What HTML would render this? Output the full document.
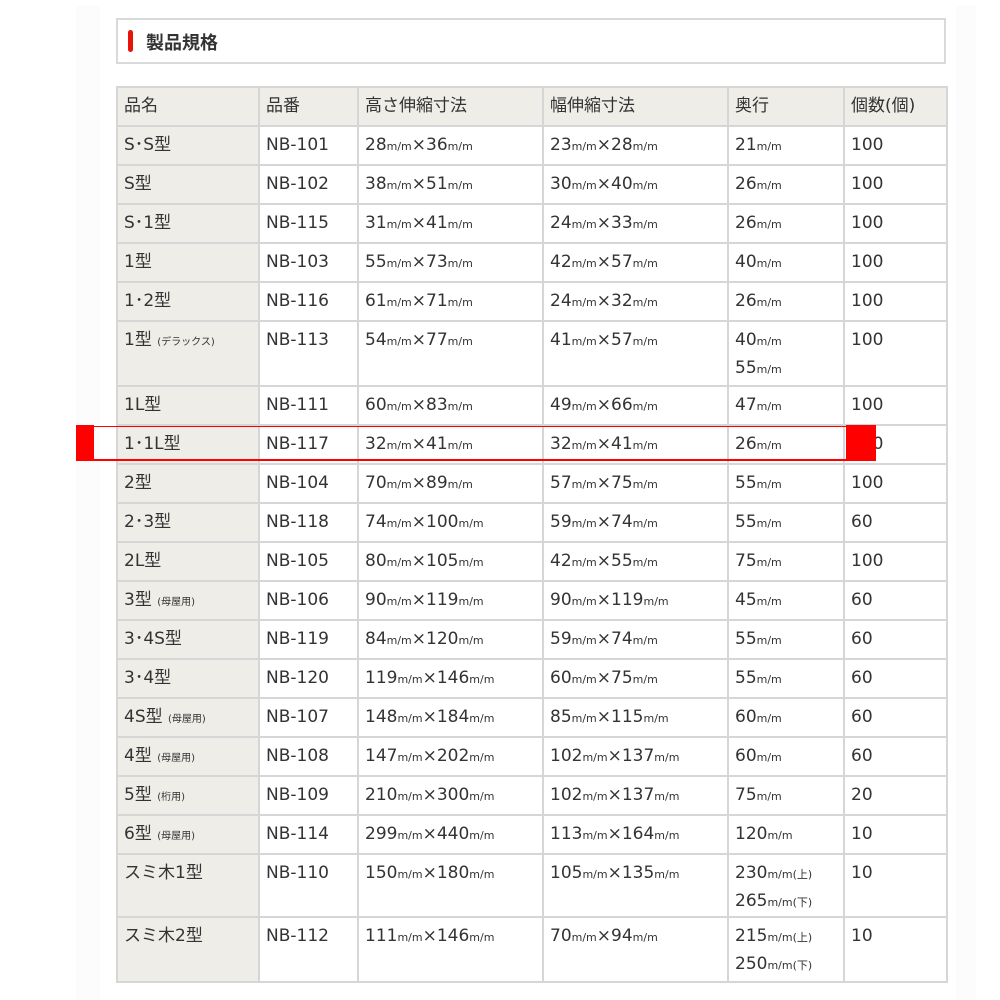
<!DOCTYPE html>
<html><head><meta charset="utf-8"><style>
body{margin:0;background:#fff;width:1000px;height:1000px;position:relative;overflow:hidden;font-family:"DejaVu Sans","Noto Sans CJK JP",sans-serif;color:#333}
.bgl{position:absolute;left:76px;top:6px;width:24px;height:994px;background:#fcfcfc}
.bgr{position:absolute;left:956px;top:6px;width:20px;height:994px;background:#fcfcfc}
.title{position:absolute;left:116px;top:18px;width:826px;height:42px;border:2px solid #d9d9d9;background:#fff}
.title .bar{position:absolute;left:10px;top:10px;width:5px;height:22px;background:#e8140a;border-radius:3px}
.title span{position:absolute;left:28px;top:9px;font-size:18px;font-weight:bold;color:#333;font-family:"Noto Sans CJK JP",sans-serif}
table{position:absolute;left:116px;top:86px;border-collapse:collapse;table-layout:fixed;width:830px}
td{border:2px solid #d6d6d6;vertical-align:top;padding:5px 0 0 6px;font-size:17px;line-height:26px;height:29px;box-sizing:border-box;white-space:nowrap}
tr{height:39px}
tr.h td{background:#efede8}
td:first-child{background:#efede8}
small{font-size:10px}
.u{font-size:11px}
.r{position:absolute;background:#f00}
</style></head><body>
<div class="bgl"></div><div class="bgr"></div>
<div class="title"><div class="bar"></div><span>製品規格</span></div>
<table>
<colgroup><col style="width:142px"><col style="width:99px"><col style="width:185px"><col style="width:185px"><col style="width:116px"><col style="width:103px"></colgroup>
<tr class="h"><td>品名</td><td>品番</td><td>高さ伸縮寸法</td><td>幅伸縮寸法</td><td>奥行</td><td>個数(個)</td></tr>
<tr><td>S･S型</td><td>NB-101</td><td>28<span class="u">m/m</span>×36<span class="u">m/m</span></td><td>23<span class="u">m/m</span>×28<span class="u">m/m</span></td><td>21<span class="u">m/m</span></td><td>100</td></tr>
<tr><td>S型</td><td>NB-102</td><td>38<span class="u">m/m</span>×51<span class="u">m/m</span></td><td>30<span class="u">m/m</span>×40<span class="u">m/m</span></td><td>26<span class="u">m/m</span></td><td>100</td></tr>
<tr><td>S･1型</td><td>NB-115</td><td>31<span class="u">m/m</span>×41<span class="u">m/m</span></td><td>24<span class="u">m/m</span>×33<span class="u">m/m</span></td><td>26<span class="u">m/m</span></td><td>100</td></tr>
<tr><td>1型</td><td>NB-103</td><td>55<span class="u">m/m</span>×73<span class="u">m/m</span></td><td>42<span class="u">m/m</span>×57<span class="u">m/m</span></td><td>40<span class="u">m/m</span></td><td>100</td></tr>
<tr><td>1･2型</td><td>NB-116</td><td>61<span class="u">m/m</span>×71<span class="u">m/m</span></td><td>24<span class="u">m/m</span>×32<span class="u">m/m</span></td><td>26<span class="u">m/m</span></td><td>100</td></tr>
<tr style="height:65px"><td>1型 <small>(デラックス)</small></td><td>NB-113</td><td>54<span class="u">m/m</span>×77<span class="u">m/m</span></td><td>41<span class="u">m/m</span>×57<span class="u">m/m</span></td><td>40<span class="u">m/m</span><br>55<span class="u">m/m</span></td><td>100</td></tr>
<tr><td>1L型</td><td>NB-111</td><td>60<span class="u">m/m</span>×83<span class="u">m/m</span></td><td>49<span class="u">m/m</span>×66<span class="u">m/m</span></td><td>47<span class="u">m/m</span></td><td>100</td></tr>
<tr><td>1･1L型</td><td>NB-117</td><td>32<span class="u">m/m</span>×41<span class="u">m/m</span></td><td>32<span class="u">m/m</span>×41<span class="u">m/m</span></td><td>26<span class="u">m/m</span></td><td>100</td></tr>
<tr><td>2型</td><td>NB-104</td><td>70<span class="u">m/m</span>×89<span class="u">m/m</span></td><td>57<span class="u">m/m</span>×75<span class="u">m/m</span></td><td>55<span class="u">m/m</span></td><td>100</td></tr>
<tr><td>2･3型</td><td>NB-118</td><td>74<span class="u">m/m</span>×100<span class="u">m/m</span></td><td>59<span class="u">m/m</span>×74<span class="u">m/m</span></td><td>55<span class="u">m/m</span></td><td>60</td></tr>
<tr><td>2L型</td><td>NB-105</td><td>80<span class="u">m/m</span>×105<span class="u">m/m</span></td><td>42<span class="u">m/m</span>×55<span class="u">m/m</span></td><td>75<span class="u">m/m</span></td><td>100</td></tr>
<tr><td>3型 <small>(母屋用)</small></td><td>NB-106</td><td>90<span class="u">m/m</span>×119<span class="u">m/m</span></td><td>90<span class="u">m/m</span>×119<span class="u">m/m</span></td><td>45<span class="u">m/m</span></td><td>60</td></tr>
<tr><td>3･4S型</td><td>NB-119</td><td>84<span class="u">m/m</span>×120<span class="u">m/m</span></td><td>59<span class="u">m/m</span>×74<span class="u">m/m</span></td><td>55<span class="u">m/m</span></td><td>60</td></tr>
<tr><td>3･4型</td><td>NB-120</td><td>119<span class="u">m/m</span>×146<span class="u">m/m</span></td><td>60<span class="u">m/m</span>×75<span class="u">m/m</span></td><td>55<span class="u">m/m</span></td><td>60</td></tr>
<tr><td>4S型 <small>(母屋用)</small></td><td>NB-107</td><td>148<span class="u">m/m</span>×184<span class="u">m/m</span></td><td>85<span class="u">m/m</span>×115<span class="u">m/m</span></td><td>60<span class="u">m/m</span></td><td>60</td></tr>
<tr><td>4型 <small>(母屋用)</small></td><td>NB-108</td><td>147<span class="u">m/m</span>×202<span class="u">m/m</span></td><td>102<span class="u">m/m</span>×137<span class="u">m/m</span></td><td>60<span class="u">m/m</span></td><td>60</td></tr>
<tr><td>5型 <small>(桁用)</small></td><td>NB-109</td><td>210<span class="u">m/m</span>×300<span class="u">m/m</span></td><td>102<span class="u">m/m</span>×137<span class="u">m/m</span></td><td>75<span class="u">m/m</span></td><td>20</td></tr>
<tr><td>6型 <small>(母屋用)</small></td><td>NB-114</td><td>299<span class="u">m/m</span>×440<span class="u">m/m</span></td><td>113<span class="u">m/m</span>×164<span class="u">m/m</span></td><td>120<span class="u">m/m</span></td><td>10</td></tr>
<tr style="height:63px"><td>スミ木1型</td><td>NB-110</td><td>150<span class="u">m/m</span>×180<span class="u">m/m</span></td><td>105<span class="u">m/m</span>×135<span class="u">m/m</span></td><td>230<span class="u">m/m(上)</span><br>265<span class="u">m/m(下)</span></td><td>10</td></tr>
<tr style="height:65px"><td>スミ木2型</td><td>NB-112</td><td>111<span class="u">m/m</span>×146<span class="u">m/m</span></td><td>70<span class="u">m/m</span>×94<span class="u">m/m</span></td><td>215<span class="u">m/m(上)</span><br>250<span class="u">m/m(下)</span></td><td>10</td></tr>
</table>
<div class="r" style="left:76px;top:425px;width:18px;height:36px"></div>
<div class="r" style="left:94px;top:426px;width:752px;height:1px"></div>
<div class="r" style="left:94px;top:459px;width:752px;height:2px"></div>
<div class="r" style="left:846px;top:425px;width:30px;height:36px"></div>
</body></html>
